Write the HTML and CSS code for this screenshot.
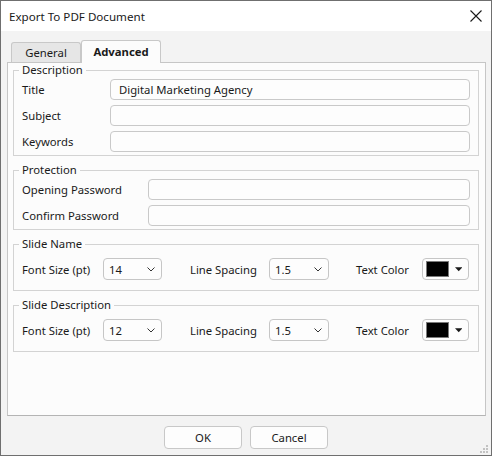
FILE: index.html
```html
<!DOCTYPE html>
<html>
<head>
<meta charset="utf-8">
<link rel="stylesheet" href="styles.css">
</head>
<body>
<div class="window">
  <div class="titlebar">
    <span class="title">Export To PDF Document</span>
    <svg class="close" width="12" height="12" viewBox="0 0 12 12"><path d="M0.5 0.5 L11.5 11.5 M11.5 0.5 L0.5 11.5" stroke="#1a1a1a" stroke-width="1.1" fill="none"/></svg>
  </div>
  <div class="body">
    <div class="tabs">
      <div class="tab">General</div>
      <div class="tab active">Advanced</div>
    </div>
    <div class="pane">
      <fieldset class="group compact">
        <legend>Description</legend>
        <div class="field desc"><span class="label">Title</span><div class="input">Digital Marketing Agency</div></div>
        <div class="field desc"><span class="label">Subject</span><div class="input"></div></div>
        <div class="field desc"><span class="label">Keywords</span><div class="input"></div></div>
      </fieldset>
      <fieldset class="group compact">
        <legend>Protection</legend>
        <div class="field prot"><span class="label">Opening Password</span><div class="input"></div></div>
        <div class="field prot"><span class="label">Confirm Password</span><div class="input"></div></div>
      </fieldset>
      <fieldset class="group roomy">
        <legend>Slide Name</legend>
        <div class="optrow">
          <span class="label l-size">Font Size (pt)</span>
          <div class="select s-size"><span>14</span><svg width="8" height="5" viewBox="0 0 8 5"><path d="M0.5 0.5 L4 4 L7.5 0.5" stroke="#333" stroke-width="1" fill="none"/></svg></div>
          <span class="label l-spacing">Line Spacing</span>
          <div class="select s-spacing"><span>1.5</span><svg width="8" height="5" viewBox="0 0 8 5"><path d="M0.5 0.5 L4 4 L7.5 0.5" stroke="#333" stroke-width="1" fill="none"/></svg></div>
          <span class="label l-color">Text Color</span>
          <div class="colorbtn"><span class="swatch"></span><svg width="8" height="5" viewBox="0 0 8 5"><path d="M0 0 L8 0 L4 4.5 Z" fill="#1a1a1a"/></svg></div>
        </div>
      </fieldset>
      <fieldset class="group roomy">
        <legend>Slide Description</legend>
        <div class="optrow">
          <span class="label l-size">Font Size (pt)</span>
          <div class="select s-size"><span>12</span><svg width="8" height="5" viewBox="0 0 8 5"><path d="M0.5 0.5 L4 4 L7.5 0.5" stroke="#333" stroke-width="1" fill="none"/></svg></div>
          <span class="label l-spacing">Line Spacing</span>
          <div class="select s-spacing"><span>1.5</span><svg width="8" height="5" viewBox="0 0 8 5"><path d="M0.5 0.5 L4 4 L7.5 0.5" stroke="#333" stroke-width="1" fill="none"/></svg></div>
          <span class="label l-color">Text Color</span>
          <div class="colorbtn"><span class="swatch"></span><svg width="8" height="5" viewBox="0 0 8 5"><path d="M0 0 L8 0 L4 4.5 Z" fill="#1a1a1a"/></svg></div>
        </div>
      </fieldset>
    </div>
    <div class="buttons">
      <div class="btn">OK</div>
      <div class="btn">Cancel</div>
    </div>
  </div>
  <svg class="grip" width="10" height="10" viewBox="0 0 10 10">
    <rect x="7" y="1" width="2" height="2" fill="#c2c2c2"/>
    <rect x="4" y="4" width="2" height="2" fill="#c2c2c2"/>
    <rect x="7" y="4" width="2" height="2" fill="#c2c2c2"/>
    <rect x="1" y="7" width="2" height="2" fill="#c2c2c2"/>
    <rect x="4" y="7" width="2" height="2" fill="#c2c2c2"/>
    <rect x="7" y="7" width="2" height="2" fill="#c2c2c2"/>
  </svg>
</div>
</body>
</html>
```

FILE: styles.css
```css
* { box-sizing: border-box; }
html, body { margin: 0; padding: 0; }
body {
  font-family: "Noto Sans", "Open Sans", sans-serif;
  font-size: 11.3px;
  color: #1a1a1a;
  background: #f3f3f3;
}
.window {
  position: relative;
  width: 492px;
  height: 456px;
  border: 1px solid #6f6f6f;
  background: #f3f3f3;
  display: flex;
  flex-direction: column;
}
.titlebar {
  height: 30px;
  background: #ffffff;
  display: flex;
  align-items: center;
  justify-content: space-between;
  padding: 0 9px 0 8px;
}
.title { font-size: 11.6px; line-height: 16px; color: #1a1a1a; padding-top: 1px; }
.close { display: block; }
.body {
  flex: 1;
  padding: 9px 0 0 6px;
  display: flex;
  flex-direction: column;
}
.tabs {
  height: 22px;
  display: flex;
  align-items: flex-end;
  padding-left: 4px;
}
.tab {
  height: 20px;
  width: 70px;
  border: 1px solid #c8c8c8;
  border-bottom: none;
  border-radius: 3px 3px 0 0;
  background: #e6e6e6;
  display: flex;
  align-items: center;
  justify-content: center;
  line-height: 16px;
  color: #1a1a1a;
}
.tab.active {
  position: relative;
  z-index: 1;
  width: 80px;
  height: 23px;
  margin-bottom: -1px;
  background: #fcfcfc;
  font-weight: 700;
  padding-bottom: 1px;
}
.pane {
  width: 479px;
  height: 354px;
  border: 1px solid #c6c6c6;
  border-bottom-color: #b4b4b4;
  background: #fcfcfc;
  padding: 0 6px 0 5px;
  display: flex;
  flex-direction: column;
  gap: 7px;
}
.group {
  margin: 0;
  border: 1px solid #d3d3d3;
  min-width: 0;
}
.group legend {
  padding: 0 3px;
  margin-left: -3px;
  line-height: 14px;
  color: #1a1a1a;
}
.group.compact {
  padding: 2px 8px 3px 8px;
  display: flex;
  flex-direction: column;
  gap: 5px;
}
.group.roomy {
  padding: 7px 8px 10px 8px;
}
.field {
  display: flex;
  align-items: center;
  height: 21px;
}
.field .label { flex: none; }
.field.desc .label { width: 88px; }
.field.prot .label { width: 126px; }
.input {
  flex: 1;
  height: 21px;
  border: 1px solid #c9c9c9;
  border-radius: 4px;
  background: #fdfdfd;
  padding: 0 8px;
  line-height: 19px;
  color: #1a1a1a;
}
.optrow {
  display: flex;
  align-items: center;
  height: 22px;
}
.label { line-height: 16px; padding-top: 1px; }
.l-size { width: 81px; flex: none; }
.l-spacing { width: 79px; margin-left: 28px; flex: none; }
.l-color { width: 66px; margin-left: 27px; flex: none; }
.select {
  flex: none;
  height: 22px;
  border: 1px solid #c6c6c6;
  border-radius: 4px;
  background: #fdfdfd;
  display: flex;
  align-items: center;
  justify-content: space-between;
  padding: 1px 6px 0 5px;
}
.select svg { display: block; }
.s-size { width: 59px; }
.s-spacing { width: 60px; }
.colorbtn {
  flex: none;
  width: 47px;
  height: 22px;
  border: 1px solid #c6c6c6;
  border-radius: 4px;
  background: #fdfdfd;
  display: flex;
  align-items: center;
  padding: 0 6px 0 3px;
  gap: 6px;
}
.swatch {
  width: 24px;
  height: 16px;
  background: #000;
  border: 1px solid #7a7a7a;
}
.colorbtn svg { display: block; }
.buttons {
  display: flex;
  justify-content: center;
  gap: 8px;
  margin-top: 10px;
  margin-left: -6px;
}
.btn {
  width: 78px;
  height: 23px;
  border: 1px solid #c8c8c8;
  border-radius: 4px;
  background: #fdfdfd;
  display: flex;
  align-items: center;
  justify-content: center;
  line-height: 16px;
  padding-top: 1px;
  color: #1a1a1a;
}
.grip {
  position: absolute;
  right: 2px;
  bottom: 1px;
}
```
